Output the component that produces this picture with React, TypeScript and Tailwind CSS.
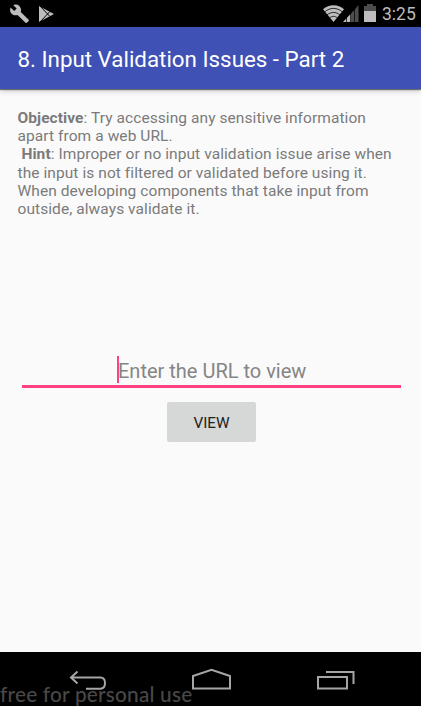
const description = [
  { lead: 'Objective', text: ': Try accessing any sensitive information' },
  { lead: '', text: 'apart from a web URL.' },
  { lead: ' Hint', text: ': Improper or no input validation issue arise when' },
  { lead: '', text: 'the input is not filtered or validated before using it.' },
  { lead: '', text: 'When developing components that take input from' },
  { lead: '', text: 'outside, always validate it.' },
];

function StatusBar() {
  return (
    <div className="flex h-[27px] shrink-0 items-start bg-black">
      <svg className="ml-[10px] mt-1" width="20" height="20" viewBox="0 0 20 20" fill="#bdbdbd">
        <path d="M18.7 15.8 10.7 8C11.4 6 10.9 3.7 9.3 2.1 7.6.5 5.1.2 3.1 1.1L6.7 4.6 4.2 7.1.6 3.6C-.3 5.6 0 8.1 1.7 9.7c1.6 1.6 3.9 2 5.8 1.3l8 7.8c.4.4.9.4 1.3 0l1.9-1.8c.4-.4.4-.9 0-1.2Z" />
      </svg>
      <svg className="ml-[9px] mt-[6px]" width="15" height="16" viewBox="0 0 15 16">
        <path d="M0 0 15 8 0 16Z" fill="#bdbdbd" />
        <path d="M1 0 11 10.6M1 16 11 5.4" stroke="#000" strokeWidth="1" />
      </svg>
      <svg className="ml-auto mt-[5px]" width="21" height="17" viewBox="0 0 21 17">
        <path d="M0 4.3C6-1.1 15-1.1 21 4.3L10.5 17Z" fill="#bdbdbd" />
        <path d="M1.5 7C7 2.2 14 2.2 19.5 7M4 10C8 6.6 13 6.6 17 10M6.5 13C9 10.8 12 10.8 14.5 13" fill="none" stroke="#000" strokeWidth="0.800" />
      </svg>
      <svg className="-ml-px mt-[5px]" width="16" height="17" viewBox="0 0 16 17">
        <path d="M0 17 3.300 13.500V17ZM4 12.700 7.300 9.200V17H4Z" fill="#bdbdbd" />
        <path d="M8 8.500 11.300 5V17H8ZM12 4.200 15.500 0V17H12Z" fill="#4d4d4d" />
      </svg>
      <svg className="ml-[5px] mt-1" width="12" height="18" viewBox="0 0 12 18">
        <path d="M0 2h3V0h6v2h3v5H0Z" fill="#4d4d4d" />
        <path d="M0 7h12v11H0Z" fill="#bdbdbd" />
      </svg>
      <span className="ml-[6px] mt-[3px] w-[39px] whitespace-nowrap text-[17.500px] leading-[23px] text-[#bdbdbd]">3:25</span>
    </div>
  );
}

function NavigationBar() {
  return (
    <nav className="relative flex h-[54px] shrink-0 items-start bg-black">
      <svg className="ml-[69px] mt-[18px]" width="38" height="22" viewBox="0 0 38 22" fill="none" stroke="#a6a6a6" strokeWidth="2">
        <path d="M8.5 1.5 2 7.5l6.500 6M2 7.500H31.500Q36 7.500 36 13T31.500 18.700H17" />
      </svg>
      <svg className="ml-[84px] mt-[16px]" width="41" height="23" viewBox="0 0 41 23" fill="none" stroke="#a6a6a6" strokeWidth="2">
        <path d="M2 20.500V8L20.500 1.700 39 8v12.500Z" />
      </svg>
      <svg className="ml-[85px] mt-[18px]" width="39" height="21" viewBox="0 0 39 21" fill="none" stroke="#a6a6a6" strokeWidth="2">
        <path d="M1 7h29v11.500H1ZM9 2h27.500v12" />
      </svg>
      <span className="absolute left-0 top-[30px] whitespace-pre font-[Lato] text-[20.800px] font-medium leading-6 tracking-[0.200px] text-[#484848]">free for personal use</span>
    </nav>
  );
}

export default function App() {
  return (
    <div className="flex h-[707px] w-[421px] flex-col overflow-hidden bg-[#fafafa] font-[Roboto,sans-serif]">
      <StatusBar />
      <header className="z-10 flex h-[62px] shrink-0 items-center bg-[#3f51b5] pl-[17.500px] pt-[3px] text-[22.350px] text-white shadow-[0_1px_1px_rgba(0,0,0,0.5),0_2px_6px_rgba(0,0,0,0.2)]">
        <h1 className="whitespace-nowrap">8. Input Validation Issues - Part 2</h1>
      </header>
      <main className="flex min-h-0 flex-1 flex-col">
        <div className="ml-[17.500px] mt-5 text-[15.500px] leading-[18.2px] tracking-[0.075px] text-[#7b7b7b]">
          {description.map((line) => (
            <p key={line.text} className="whitespace-pre">
              <b>{line.lead}</b>
              {line.text}
            </p>
          ))}
        </div>
        <div className="ml-[22px] mt-[139px] flex h-[31px] w-[379px] items-start border-b-[3px] border-[#ff4081] pl-[95px]">
          <span className="-mt-px h-[27px] w-[2px] shrink-0 bg-[#ff4081]" />
          <span className="-ml-px whitespace-nowrap text-[20px] leading-[28px] text-[#858585]">Enter the URL to view</span>
        </div>
        <button className="ml-[167px] mt-[14px] h-[40px] w-[89px] rounded-[2px] bg-[#d6d7d7] pt-[2px] text-[15.300px] text-[#212121]">VIEW</button>
      </main>
      <NavigationBar />
      <div className="h-px shrink-0 bg-[#fafafa]" />
    </div>
  );
}
